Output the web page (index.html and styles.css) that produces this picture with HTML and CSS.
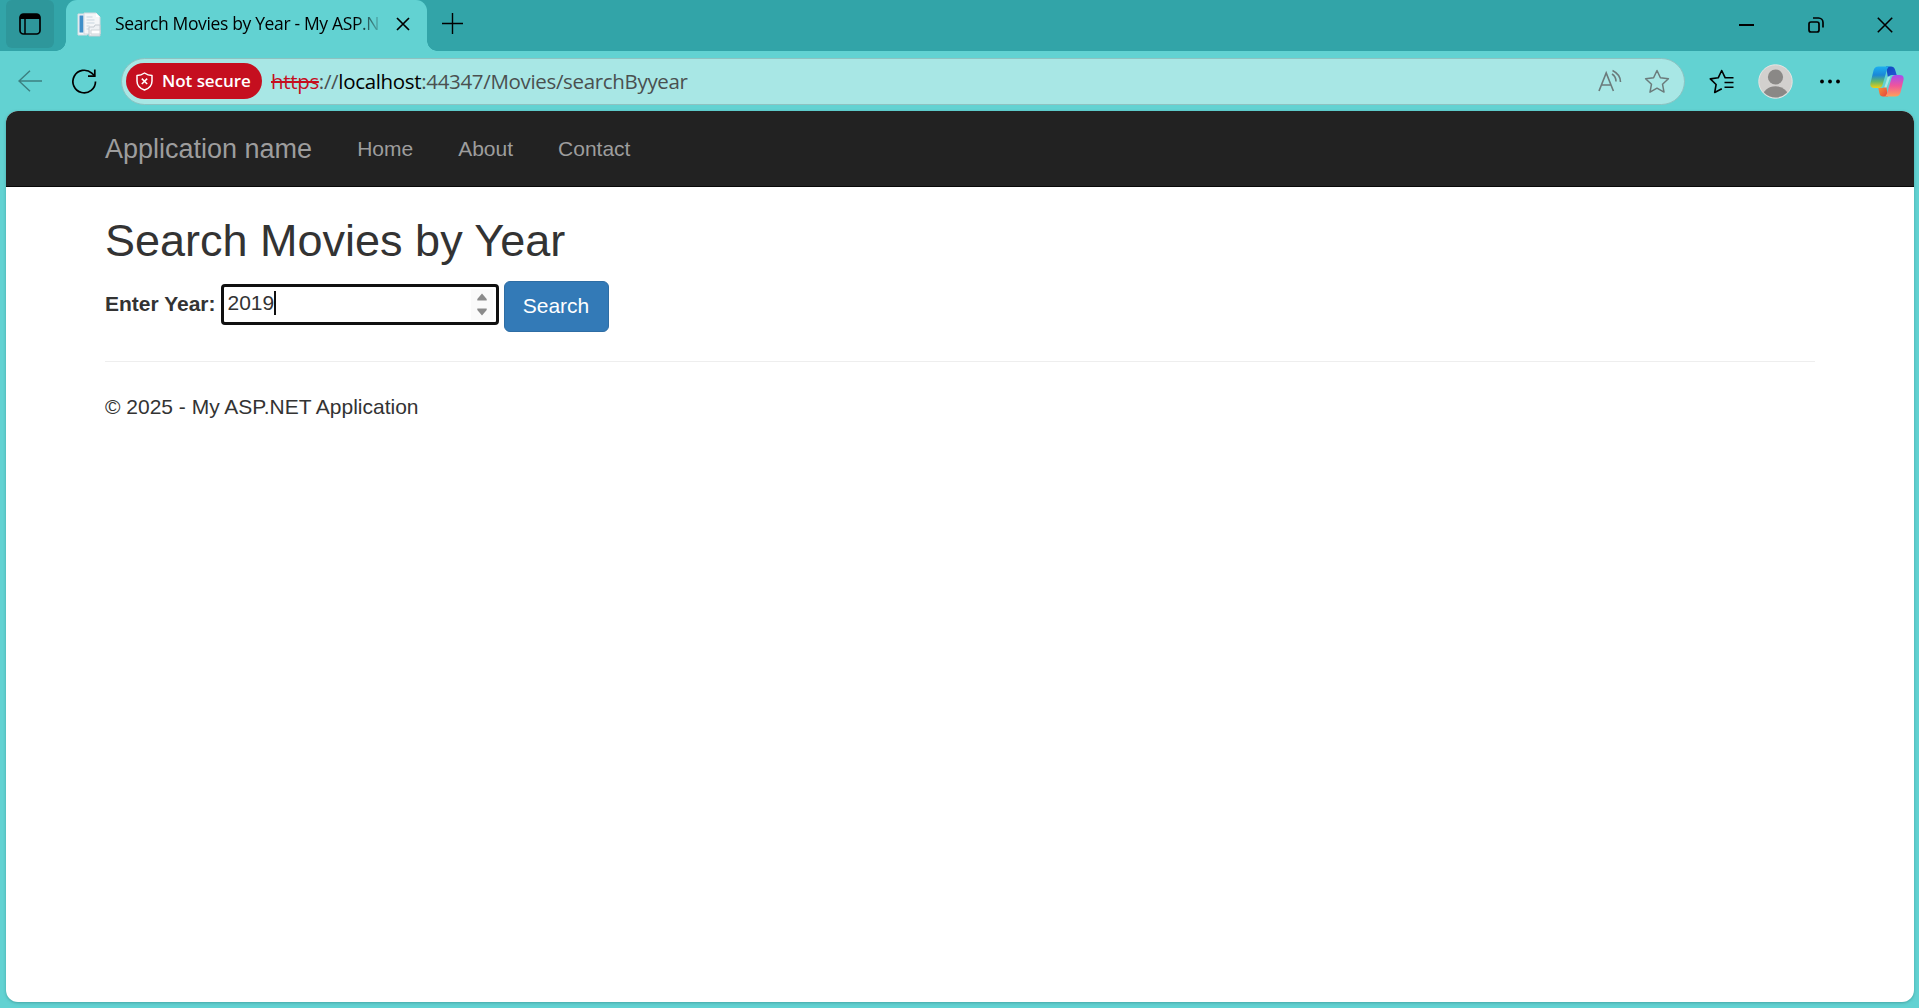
FILE: index.html
```html
<!DOCTYPE html>
<html lang="en">
<head>
<meta charset="utf-8">
<title>Search Movies by Year - My ASP.NET Application</title>
<link rel="stylesheet" href="styles.css">
</head>
<body>
<div class="tabstrip">
  <div class="tab-actions">
    <svg width="22" height="22" viewBox="0 0 22 22"><rect x="1" y="1" width="20" height="20" rx="3.5" fill="none" stroke="#000" stroke-width="1.7"/><path d="M1 6V4a3 3 0 0 1 3-3h14a3 3 0 0 1 3 3v2z"/><path d="M6 6v15" stroke="#000" stroke-width="1.5"/></svg>
  </div>
  <div class="tab">
    <svg class="favicon" width="25" height="25" viewBox="0 0 25 25"><path d="M1 2h9v21H1z" fill="#f3f6f9" stroke="#d6dce2"/><path d="M2.5 3.500h4v17h-4z" fill="#3e8fc9"/><path d="M7 1h12l4 4v17H7z" fill="#f4f6f8" stroke="#d2d9df"/><path d="M19 1v4h4z" fill="#fff"/><path d="M9.500 5h6M9.500 8h8M9.500 11h8M9.500 14h3M9.500 17h3" stroke="#c7d5df"/><path d="M12 15h5l1-2h5v11H12z" fill="#eef1f4" stroke="#c4cbd1"/><path d="M14 18h9v4h-9z" fill="#fff" stroke="#cfd4d8"/></svg>
    <span class="tab-title">Search Movies by Year - My ASP.N</span>
    <svg class="tab-close" width="14" height="14" viewBox="0 0 14 14"><path d="M1 1l12 12M13 1L1 13" stroke="#000" stroke-width="1.7"/></svg>
  </div>
  <svg class="new-tab" width="21" height="21" viewBox="0 0 21 21"><path d="M10.500 0v21M0 10.500h21" stroke="#000" stroke-width="1.400"/></svg>
  <div class="window-buttons">
    <svg width="15" height="16" viewBox="0 0 15 16"><path d="M0 8h15" stroke="#000" stroke-width="2"/></svg>
    <svg width="16" height="16" viewBox="0 0 16 16" fill="none" stroke="#000" stroke-width="1.700"><rect x="1" y="5" width="10" height="10" rx="2"/><path d="M5 1h5.500A4.500 4.500 0 0 1 15 5.500V10.500"/></svg>
    <svg width="16" height="16" viewBox="0 0 16 16"><path d="M.8.8l14.400 14.400M15.200.8L.8 15.200" stroke="#000" stroke-width="1.600"/></svg>
  </div>
</div>
<div class="toolbar">
  <svg class="back" width="24" height="22" viewBox="0 0 24 22" fill="none" stroke="#3c8081" stroke-width="1.500"><path d="M24 11H1M12 .7L1 11l11 10.300"/></svg>
  <svg class="reload" width="25" height="25" viewBox="0 0 25 25" fill="none" stroke="#000" stroke-width="1.700"><path d="M23.500 12.500A11.300 11.300 0 1 1 19.800 4.200L22.800 7"/><path d="M22.800 .5V7.200H16"/></svg>
  <div class="address">
    <div class="badge">
      <svg width="17" height="19" viewBox="0 0 17 19" fill="none" stroke="#fff" stroke-width="1.500"><path d="M8.500 1Q12 3.500 16 3.500V9Q16 15.500 8.500 18Q1 15.500 1 9V3.500Q5 3.500 8.500 1z" stroke-linejoin="round"/><path d="M5.800 6.600l5.400 5.400M11.200 6.600L5.800 12"/></svg>
      <span class="badge-text">Not secure</span>
    </div>
    <div class="url"><span class="scheme">https</span>://<span class="host">localhost</span>:44347/Movies/searchByyear</div>
    <svg class="read" width="24" height="23" viewBox="0 0 24 23" fill="none" stroke="#6b7b7b" stroke-width="1.600"><path d="M1 22L8.200 4L15.400 22M3.600 16h9.300M14 5Q18 7.500 18 12.500M14.500 1.500Q22.500 5.500 22.500 13" /></svg>
    <svg class="fav" width="26" height="25" viewBox="0 0 26 25" fill="none" stroke="#6b7b7b" stroke-width="1.500" stroke-linejoin="round"><path d="M13 1.500l3.400 7.200 8 1-5.900 5.500 1.500 7.900L13 19.200l-7 3.900 1.500-7.900L1.600 9.700l8-1z"/></svg>
  </div>
  <svg class="favorites" width="25" height="25" viewBox="0 0 25 25" fill="none" stroke="#000" stroke-width="1.600" stroke-linejoin="round"><path d="M24.500 8.800H16.200L12.700 1.500 9.200 8.800 1.300 9.900l5.800 5.600-1.400 8L12.800 19.700M15.500 13.500h9M15.500 18.200h9"/></svg>
  <svg class="profile" width="35" height="35" viewBox="0 0 35 35"><defs><clipPath id="disc"><circle cx="17.500" cy="17.500" r="16"/></clipPath></defs><circle cx="17.500" cy="17.500" r="16.700" fill="#d2d0ce" stroke="#e7e5e3" stroke-width="1"/><g fill="#8a8886" clip-path="url(#disc)"><circle cx="17.500" cy="13" r="7.600"/><ellipse cx="17.500" cy="33.500" rx="13" ry="11.300"/></g></svg>
  <svg class="more" width="20" height="5" viewBox="0 0 20 5"><circle cx="2" cy="2.500" r="1.900"/><circle cx="10" cy="2.500" r="1.900"/><circle cx="18" cy="2.500" r="1.900"/></svg>
  <svg class="copilot" width="34" height="31" viewBox="0 0 34 31">
    <defs>
      <linearGradient id="left" x1="0" y1="0" x2="0" y2="1"><stop offset="0" stop-color="#1cb0f0"/><stop offset=".4" stop-color="#1b87d8"/><stop offset=".7" stop-color="#62b76b"/><stop offset="1" stop-color="#f3cf10"/></linearGradient>
      <linearGradient id="right" x1="0" y1="0" x2="0" y2="1"><stop offset="0" stop-color="#a64cf0"/><stop offset=".5" stop-color="#f0559b"/><stop offset="1" stop-color="#ffa15a"/></linearGradient>
      <linearGradient id="top" x1="0" y1="0" x2="1" y2="1"><stop offset="0" stop-color="#0d49bc"/><stop offset="1" stop-color="#2557d8"/></linearGradient>
      <linearGradient id="base" x1="0" y1="0" x2="1" y2="1"><stop offset="0" stop-color="#f79b39"/><stop offset="1" stop-color="#e6403e"/></linearGradient>
    </defs>
    <path d="M16 .5h5q3 0 4 3l1.700 5.500H22q-3 0-4 3z" fill="url(#top)"/>
    <path d="M18 30.500h-5q-3 0-3.500-3L8.300 22H12q3 0 4-3z" fill="url(#base)"/>
    <path d="M8.500.5H20q-2 0-3 3l-4.500 15.500q-1 3-4 3H4.500q-5 0-4-5L3.500 4.500q1-4 5-4z" fill="url(#left)"/>
    <path d="M25.500 30.500H14q2 0 3-3L21.500 12q1-3 4-3H29.500q5 0 4 5L30.500 26.500q-1 4-5 4z" fill="url(#right)"/>
    <path d="M17.800 10.500h2.600L16.600 21.500H14.300z" fill="#a8e7e5"/>
  </svg>
</div>
<div class="page">
  <nav class="navbar">
    <a class="brand">Application name</a>
    <a class="nav-link">Home</a>
    <a class="nav-link">About</a>
    <a class="nav-link">Contact</a>
  </nav>
  <main class="container">
    <h2 class="heading">Search Movies by Year</h2>
    <form class="search-form">
      <label class="label">Enter Year:</label>
      <div class="year-input"><span class="year">2019</span><span class="caret"></span>
        <span class="spinner"><svg width="10" height="23" viewBox="0 0 10 23" fill="#8b8b8b"><path d="M5 0.500L9.700 6v1.500H.3V6zM.3 15.500h9.400V17L5 22.500.3 17z"/></svg></span>
      </div>
      <button class="search-button" type="button">Search</button>
    </form>
    <hr class="divider">
    <footer class="footer">© 2025 - My ASP.NET Application</footer>
  </main>
</div>
</body>
</html>
```
FILE: styles.css
```css
* { box-sizing: border-box; }
body {
  margin: 0;
  width: 1919px;
  height: 1008px;
  overflow: hidden;
  background: #62d2d2;
  font-family: "Liberation Sans", Arial, sans-serif;
}
svg { display: block; flex: none; }

.tabstrip {
  display: flex;
  height: 51px;
  background: #32a4a8;
  font-family: "Open Sans", "Noto Sans", sans-serif;
}
.tab-actions {
  display: flex;
  align-items: center;
  justify-content: center;
  width: 48px;
  height: 48px;
  margin-left: 6px;
  border-radius: 6px;
  background: #2e979b;
}
.tab {
  position: relative;
  display: flex;
  align-items: center;
  width: 361px;
  height: 51px;
  margin-left: 12px;
  padding: 0 17px 3px 11px;
  border-radius: 11px 11px 0 0;
  background: #62d2d2;
}
.tab::before, .tab::after {
  content: "";
  position: absolute;
  bottom: 0;
  width: 10px;
  height: 10px;
}
.tab::before { left: -10px; background: radial-gradient(circle at 0 0, #32a4a8 9.500px, #62d2d2 10px); }
.tab::after { right: -10px; background: radial-gradient(circle at 100% 0, #32a4a8 9.500px, #62d2d2 10px); }
.tab-title {
  width: 274px;
  margin-left: 13px;
  white-space: nowrap;
  font-size: 17.5px;
  line-height: 24px;
  padding-bottom: 2px;
  letter-spacing: -0.35px;
  color: #000;
  -webkit-mask-image: linear-gradient(to right, #000 240px, transparent 269px);
  mask-image: linear-gradient(to right, #000 240px, transparent 269px);
}
.tab-close { margin-left: auto; }
.new-tab { margin: 13px 0 0 15px; }
.window-buttons {
  display: flex;
  gap: 53.5px;
  margin: 17px 26px 0 auto;
}

.toolbar {
  display: flex;
  align-items: center;
  height: 60px;
  padding-right: 15px;
}
.back { margin-left: 18px; }
.reload { margin-left: 30px; }
.address {
  display: flex;
  align-items: center;
  width: 1564px;
  height: 47px;
  margin-left: 24px;
  padding: 0 14px 0 4px;
  border: 1px solid #8dc2c1;
  border-radius: 24px;
  background: #a8e7e5;
  font-family: "Open Sans", "Noto Sans", sans-serif;
}
.badge {
  display: flex;
  align-items: center;
  width: 136px;
  height: 36px;
  padding-left: 10px;
  border-radius: 18px;
  background: #c50f1f;
  color: #fff;
}
.badge-text {
  margin-left: 9px;
  padding-bottom: 1px;
  font-size: 17px;
  font-weight: 600;
  letter-spacing: -0.05px;
  white-space: nowrap;
}
.url {
  margin-left: 9px;
  font-size: 20.5px;
  letter-spacing: -0.33px;
  color: #4a5050;
  white-space: nowrap;
}
.scheme { color: #c50f1f; text-decoration: line-through 2px; }
.host { color: #000; }
.read { margin-left: auto; margin-bottom: 2px; }
.fav { margin-left: 22px; }
.favorites { margin-left: 24px; }
.profile { margin-left: 24px; }
.more { margin-left: 27px; }
.copilot { margin-left: auto; }

.page {
  width: 1908px;
  height: 891px;
  margin-left: 6px;
  overflow: hidden;
  border-radius: 12px;
  background: #fff;
  box-shadow: 0 1px 3px #287c7c80;
  color: #333;
  font-size: 21px;
}
.navbar {
  display: flex;
  align-items: center;
  height: 76px;
  padding-left: 99px;
  border-bottom: 1px solid #080808;
  background: #222;
  color: #9d9d9d;
}
.brand { margin-right: 22.5px; padding-top: 2px; font-size: 27px; }
.nav-link { padding: 0 22.5px; }
.container { width: 1710px; margin-left: 99px; }
.heading {
  margin: 0;
  padding-top: 29px;
  font-size: 45px;
  font-weight: 500;
  line-height: 49.5px;
}
.search-form {
  display: flex;
  gap: 5px;
  height: 52px;
  margin-top: 15px;
}
.label { padding-top: 8px; font-weight: 700; line-height: 30px; }
.year-input {
  display: flex;
  align-items: center;
  width: 278px;
  height: 41px;
  margin-top: 3px;
  padding: 0 3px 2px 4px;
  border: 3px solid #101010;
  border-radius: 4px;
  background: #fff;
}
.caret { width: 2px; height: 24px; background: #101010; }
.spinner {
  display: flex;
  align-items: center;
  justify-content: center;
  width: 22px;
  height: 31px;
  margin: 2px 0 0 auto;
  background: #fafafa;
}
.search-button {
  width: 105px;
  height: 51px;
  padding: 0;
  border: 1px solid #2e6da4;
  border-radius: 6px;
  background: #337ab7;
  color: #fff;
  font: 21px/30px "Liberation Sans", Arial, sans-serif;
}
.divider { margin: 28px 0 30px; border: 0; border-top: 1px solid #eee; }
.footer { line-height: 30px; }
```
